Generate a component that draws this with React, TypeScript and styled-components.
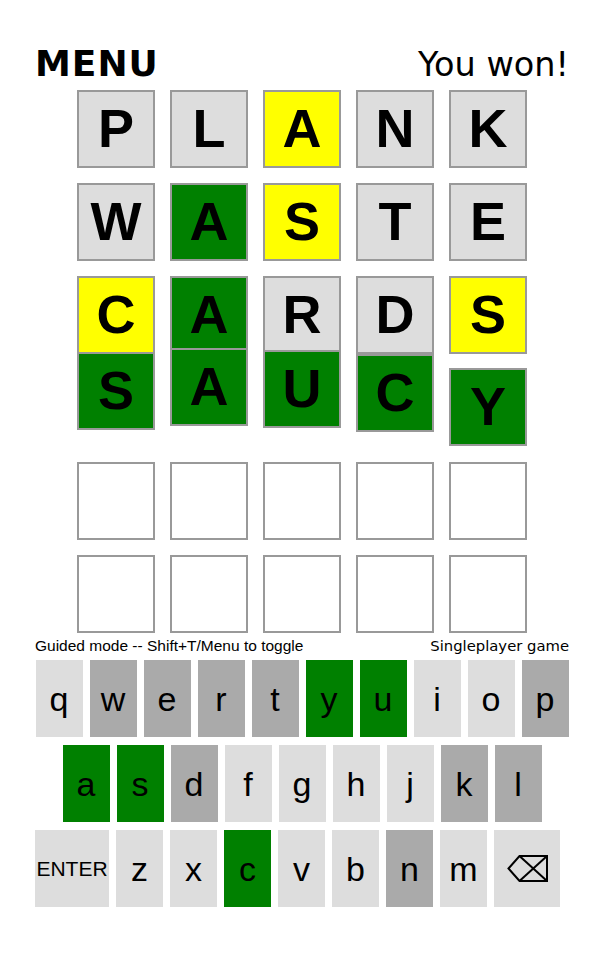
import React from "react";
import styled, { createGlobalStyle } from "styled-components";

type TileState = "correct" | "present" | "absent" | "empty";
type KeyState = "correct" | "absent" | "unused";

const GlobalStyle = createGlobalStyle`
  html, body {
    margin: 0;
    padding: 0;
    background: #ffffff;
  }
  body {
    font-family: "Liberation Sans", Arial, sans-serif;
    color: #000000;
  }
`;

const tileBg: Record<TileState, string> = {
  correct: "#008000",
  present: "#ffff00",
  absent: "#dddddd",
  empty: "#ffffff",
};

const keyBg: Record<KeyState, string> = {
  correct: "#008000",
  absent: "#aaaaaa",
  unused: "#dddddd",
};

const Page = styled.main`
  width: 534px;
  margin: 0 auto;
  padding-top: 44px;
`;

const Header = styled.header`
  display: flex;
  justify-content: space-between;
  align-items: baseline;
  height: 40px;
  line-height: 40px;
`;

const MenuButton = styled.div`
  font-family: "DejaVu Sans", Verdana, sans-serif;
  font-weight: bold;
  font-size: 36px;
  letter-spacing: 1px;
  cursor: pointer;
`;

const Status = styled.div`
  font-family: "DejaVu Sans", Verdana, sans-serif;
  font-size: 33.5px;
`;

const Board = styled.section`
  display: grid;
  grid-template-columns: repeat(5, 78px);
  grid-auto-rows: 78px;
  column-gap: 15px;
  row-gap: 15px;
  justify-content: center;
  margin-top: 6px;
`;

const Tile = styled.div<{ $state: TileState; $lift: number }>`
  box-sizing: border-box;
  width: 78px;
  height: 78px;
  border: 2px solid #999999;
  background: ${(p) => tileBg[p.$state]};
  display: flex;
  align-items: center;
  justify-content: center;
  padding-bottom: 3px;
  font-family: "Liberation Sans", Arial, sans-serif;
  font-weight: bold;
  font-size: 54px;
  line-height: 1;
  transform: translateY(${(p) => -p.$lift}px);
`;

const InfoBar = styled.div`
  display: flex;
  justify-content: space-between;
  align-items: baseline;
  margin-top: 4px;
  height: 18px;
  line-height: 18px;
`;

const ModeHint = styled.span`
  font-family: "Liberation Sans", Arial, sans-serif;
  font-size: 15.5px;
`;

const GameType = styled.span`
  font-family: "DejaVu Sans", Verdana, sans-serif;
  font-size: 14.8px;
`;

const Keyboard = styled.section`
  display: flex;
  flex-direction: column;
  gap: 8px;
  margin-top: 5px;
`;

const KeyRow = styled.div<{ $align: "center" | "flex-start" }>`
  display: flex;
  gap: 7px;
  justify-content: ${(p) => p.$align};
`;

const Key = styled.button<{ $state: KeyState; $width: number; $small?: boolean }>`
  box-sizing: border-box;
  width: ${(p) => p.$width}px;
  height: 77px;
  padding: 0;
  border: none;
  background: ${(p) => keyBg[p.$state]};
  color: #000000;
  display: flex;
  align-items: center;
  justify-content: center;
  font-family: "Liberation Sans", Arial, sans-serif;
  font-size: ${(p) => (p.$small ? "21px" : "34px")};
  line-height: 1;
  cursor: pointer;
`;

const BackspaceIcon = () => (
  <svg width="41" height="27" viewBox="0 0 41 27" fill="none" stroke="#000" strokeWidth="2">
    <polygon points="1.5,13.5 12.5,1 40,1 40,26 12.5,26" strokeLinejoin="miter" />
    <line x1="12.5" y1="1" x2="40" y2="26" />
    <line x1="40" y1="1" x2="12.5" y2="26" />
  </svg>
);

const guesses: { word: string; states: TileState[]; lift?: number[] }[] = [
  { word: "PLANK", states: ["absent", "absent", "present", "absent", "absent"] },
  { word: "WASTE", states: ["absent", "correct", "present", "absent", "absent"] },
  { word: "CARDS", states: ["present", "correct", "absent", "absent", "present"] },
  {
    word: "SAUCY",
    states: ["correct", "correct", "correct", "correct", "correct"],
    lift: [17, 21, 19, 15, 1],
  },
  { word: "     ", states: ["empty", "empty", "empty", "empty", "empty"] },
  { word: "     ", states: ["empty", "empty", "empty", "empty", "empty"] },
];

const keyStates: Record<string, KeyState> = {
  w: "absent", e: "absent", r: "absent", t: "absent", p: "absent",
  d: "absent", k: "absent", l: "absent", n: "absent",
  y: "correct", u: "correct", a: "correct", s: "correct", c: "correct",
};

const rows = ["qwertyuiop", "asdfghjkl", "zxcvbnm"];

export default function App() {
  return (
    <>
      <GlobalStyle />
      <Page>
        <Header>
          <MenuButton>MENU</MenuButton>
          <Status>You won!</Status>
        </Header>
        <Board>
          {guesses.map((g, r) =>
            g.states.map((s, i) => (
              <Tile key={`${r}-${i}`} $state={s} $lift={g.lift ? g.lift[i] : 0}>
                {g.word[i].trim()}
              </Tile>
            ))
          )}
        </Board>
        <InfoBar>
          <ModeHint>Guided mode -- Shift+T/Menu to toggle</ModeHint>
          <GameType>Singleplayer game</GameType>
        </InfoBar>
        <Keyboard>
          <KeyRow $align="center">
            {rows[0].split("").map((k) => (
              <Key key={k} $width={47} $state={keyStates[k] ?? "unused"}>{k}</Key>
            ))}
          </KeyRow>
          <KeyRow $align="center">
            {rows[1].split("").map((k) => (
              <Key key={k} $width={47} $state={keyStates[k] ?? "unused"}>{k}</Key>
            ))}
          </KeyRow>
          <KeyRow $align="flex-start">
            <Key $width={74} $state="unused" $small>ENTER</Key>
            {rows[2].split("").map((k) => (
              <Key key={k} $width={47} $state={keyStates[k] ?? "unused"}>{k}</Key>
            ))}
            <Key $width={66} $state="unused" aria-label="Backspace"><BackspaceIcon /></Key>
          </KeyRow>
        </Keyboard>
      </Page>
    </>
  );
}
